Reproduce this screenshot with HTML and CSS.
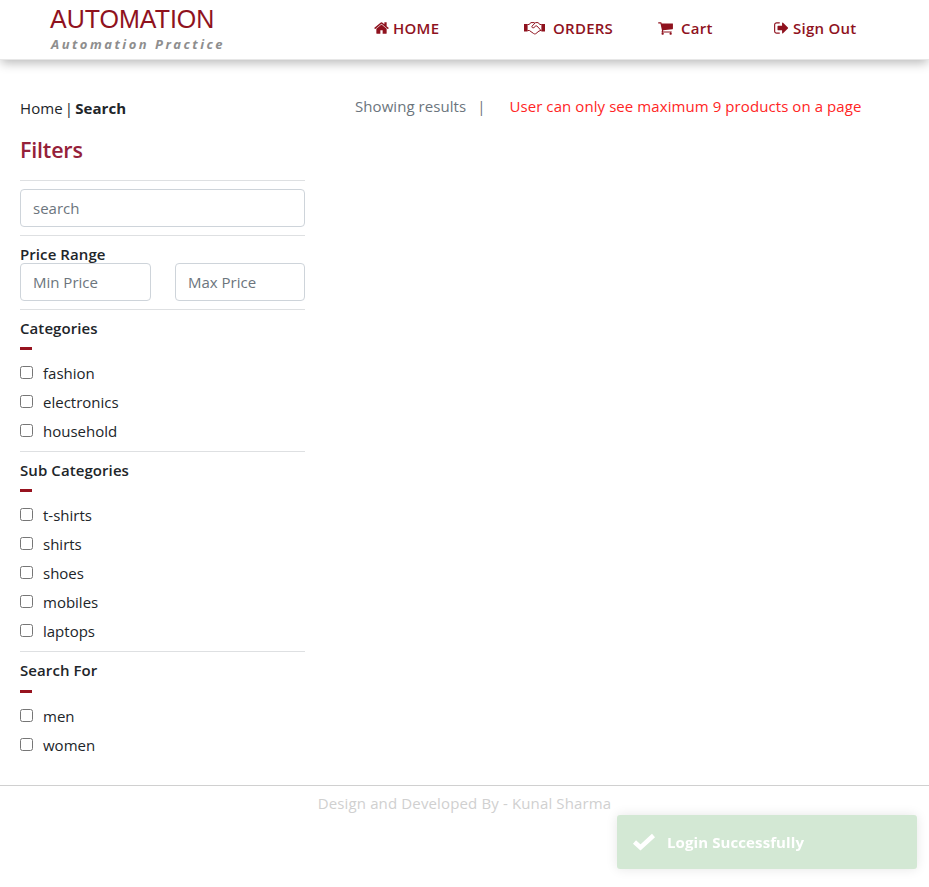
FILE: index.html
```html
<!DOCTYPE html>
<html lang="en">
<head>
<meta charset="utf-8">
<title>Automation Practice</title>
<link rel="stylesheet" href="styles.css">
</head>
<body>
<header class="topbar">
  <div class="brand">
    <div class="brand-name">AUTOMATION</div>
    <div class="brand-sub">Automation Practice</div>
  </div>
  <nav class="nav">
    <a class="nav-home"><svg class="icon" viewBox="64 0 1664 1792"><path d="M1472 992v480q0 26-19 45t-45 19h-384v-384h-256v384h-384q-26 0-45-19t-19-45v-480q0-1 .5-3t.5-3l575-474 575 474q1 2 1 6zm223-69l-62 74q-8 9-21 11h-3q-13 0-21-7l-692-577-692 577q-12 8-24 7-13-2-21-11l-62-74q-8-10-7-23.5t11-21.5l719-599q32-26 76-26t76 26l244 204v-195q0-14 9-23t23-9h192q14 0 23 9t9 23v408l219 182q10 8 11 21.5t-7 23.5z"/></svg><span>HOME</span></a>
    <a class="nav-orders"><svg class="icon icon-wide" viewBox="0 0 21 16"><path d="M0 4h3.600v7.500H0zM17.400 4H21v7.500h-3.600z"/><path class="line" d="M3.500 4.500H5L7 2.600h3l1 .8M17.500 4.500H16L14 2.600h-2.500L8 6.200c-.6 1.300 1 2.200 2 1.300l1.800-1.600h1L16 9.300c.6 1 0 1.700-1 1.700l-3 2.500c-.7.600-1.700.6-2.400 0L5.400 10.500H3.500M16 10.500h1.500"/></svg><span>ORDERS</span></a>
    <a class="nav-cart"><svg class="icon" viewBox="64 0 1664 1792"><path d="M704 1536q0 52-38 90t-90 38-90-38-38-90 38-90 90-38 90 38 38 90zm896 0q0 52-38 90t-90 38-90-38-38-90 38-90 90-38 90 38 38 90zm128-1088v512q0 24-16.500 42.500t-40.500 21.500l-1044 122q13 60 13 70 0 16-24 64h920q26 0 45 19t19 45-19 45-45 19h-1024q-26 0-45-19t-19-45q0-11 8-31.500t16-36 21.500-40 15.500-29.500l-177-823h-204q-26 0-45-19t-19-45 19-45 45-19h256q16 0 28.500 6.500t19.500 15.500 13 24.500 8 26 5.500 29.500 4.500 26h1201q26 0 45 19t19 45z"/></svg><span>Cart</span></a>
    <a class="nav-out"><svg class="icon" viewBox="64 0 1664 1792"><path d="M704 1440q0 4 1 20t.5 26.500-3 23.500-10 19.500-20.500 6.500h-320q-119 0-203.500-84.500t-84.500-203.500v-704q0-119 84.500-203.500t203.500-84.500h320q13 0 22.500 9.500t9.500 22.500q0 4 1 20t.5 26.500-3 23.500-10 19.500-20.500 6.500h-320q-66 0-113 47t-47 113v704q0 66 47 113t113 47h312l11.500 1 11.500 3 8 5.500 7 9 2 13.500zm928-544q0 26-19 45l-544 544q-19 19-45 19t-45-19-19-45v-288h-448q-26 0-45-19t-19-45v-384q0-26 19-45t45-19h448v-288q0-26 19-45t45-19 45 19l544 544q19 19 19 45z"/></svg><span>Sign Out</span></a>
  </nav>
</header>
<main class="page">
  <aside class="sidebar">
    <div class="crumbs"><span>Home</span><span>|</span><b>Search</b></div>
    <h1 class="filters">Filters</h1>
    <section class="block"><input class="field" type="text" placeholder="search"></section>
    <section class="block">
      <h2 class="title">Price Range</h2>
      <div class="range"><input class="field" type="text" placeholder="Min Price"><input class="field" type="text" placeholder="Max Price"></div>
    </section>
    <section class="block list">
      <h2 class="title">Categories</h2><div class="dash"></div>
      <label class="check"><input type="checkbox"><span>fashion</span></label>
      <label class="check"><input type="checkbox"><span>electronics</span></label>
      <label class="check"><input type="checkbox"><span>household</span></label>
    </section>
    <section class="block list">
      <h2 class="title">Sub Categories</h2><div class="dash"></div>
      <label class="check"><input type="checkbox"><span>t-shirts</span></label>
      <label class="check"><input type="checkbox"><span>shirts</span></label>
      <label class="check"><input type="checkbox"><span>shoes</span></label>
      <label class="check"><input type="checkbox"><span>mobiles</span></label>
      <label class="check"><input type="checkbox"><span>laptops</span></label>
    </section>
    <section class="block list last">
      <h2 class="title">Search For</h2><div class="dash"></div>
      <label class="check"><input type="checkbox"><span>men</span></label>
      <label class="check"><input type="checkbox"><span>women</span></label>
    </section>
  </aside>
  <div class="results"><span class="showing">Showing results</span><span class="bar">|</span><span class="limit">User can only see maximum 9 products on a page</span></div>
</main>
<footer class="footer"><span>Design and Developed By - Kunal Sharma</span></footer>
<div class="toast"><svg class="tick" viewBox="0 0 24 18"><path d="M2.500 9l6 5.500L21.500 2.500"/></svg><span>Login Successfully</span></div>
</body>
</html>
```
FILE: styles.css
```css
* { box-sizing: border-box; }
body {
  margin: 0;
  height: 887px;
  overflow: hidden;
  background: #fff;
  color: #212529;
  font: 400 15px/20px "Open Sans", "Noto Sans", sans-serif;
  white-space: nowrap;
}
h1, h2 { margin: 0; }
.topbar {
  display: flex;
  height: 60px;
  padding-left: 50px;
  border-bottom: 1px solid #e7e7e7;
  box-shadow: 0 4px 10px -1px rgba(0, 0, 0, .28);
}
.brand { width: 324px; color: #8f121e; }
.brand-name {
  padding-top: 5px;
  font: 25px/29px "Liberation Sans", sans-serif;
}
.brand-sub {
  padding-left: 1px;
  color: #8e8e8e;
  font: italic 700 13px/20px "Open Sans", sans-serif;
  letter-spacing: 2.5px;
}
.nav {
  display: grid;
  grid-template-columns: 150px 134px 116px 120px;
  height: 55px;
  align-items: center;
  color: #8f121e;
  font-weight: 600;
  letter-spacing: .25px;
}
.nav a { display: flex; align-items: center; gap: 4px; }
.nav .nav-orders, .nav .nav-cart { gap: 8px; }
.icon { width: 15px; height: 16px; fill: currentColor; flex: none; }
.icon-wide { width: 21px; }
.line { fill: none; stroke: currentColor; stroke-width: 1; stroke-linejoin: round; }
.page { display: flex; height: 725px; }
.sidebar { width: 285px; margin-left: 20px; padding-top: 38px; }
.crumbs { display: flex; gap: 2px; letter-spacing: .1px; }
.filters {
  height: 62px;
  padding-top: 17px;
  color: #95213a;
  font-size: 21.5px;
  line-height: 30px;
  font-weight: 600;
  letter-spacing: -.2px;
}
.block { padding: 8px 0; border-top: 1px solid #dee0e2; }
.field {
  display: block;
  width: 100%;
  min-width: 0;
  height: 38px;
  padding: 0 12px;
  border: 1px solid #ced4da;
  border-radius: 4px;
  background: #fff;
  font: inherit;
}
.field::placeholder { color: #6c757d; opacity: 1; }
.range { display: grid; grid-template-columns: 131px 130px; gap: 24px; }
.title { height: 19px; font-size: 15px; line-height: 20px; font-weight: 600; letter-spacing: .08px; }
.list { padding-bottom: 6px; }
.dash { width: 12px; height: 3px; margin: 10px 0 8px; background: #97131f; }
.last .dash { margin-top: 11px; }
.check { display: flex; align-items: center; height: 29px; gap: 10px; }
.check input { width: 13px; height: 13px; margin: 0; }
.check span { padding-top: 1px; }
.results { display: flex; height: 20px; margin: 36px 0 0 50px; color: #6c757d; }
.showing { letter-spacing: .06px; }
.bar { margin-left: 11px; }
.limit { margin-left: 24px; color: #ff2525; letter-spacing: .08px; }
.footer {
  padding-top: 7px;
  border-top: 1px solid #d0d0d0;
  text-align: center;
  color: #d0d0d0;
  letter-spacing: .14px;
}
.toast {
  position: fixed;
  left: 617px;
  top: 815px;
  display: flex;
  align-items: center;
  gap: 11px;
  width: 300px;
  height: 54px;
  padding-left: 15px;
  border-radius: 3px;
  background: #d3e8d4;
  box-shadow: 0 0 12px rgba(0, 0, 0, .1);
  color: #fff;
  font-weight: 700;
  letter-spacing: .1px;
}
.tick { width: 24px; height: 18px; fill: none; stroke: #fff; stroke-width: 4.5; }
```
